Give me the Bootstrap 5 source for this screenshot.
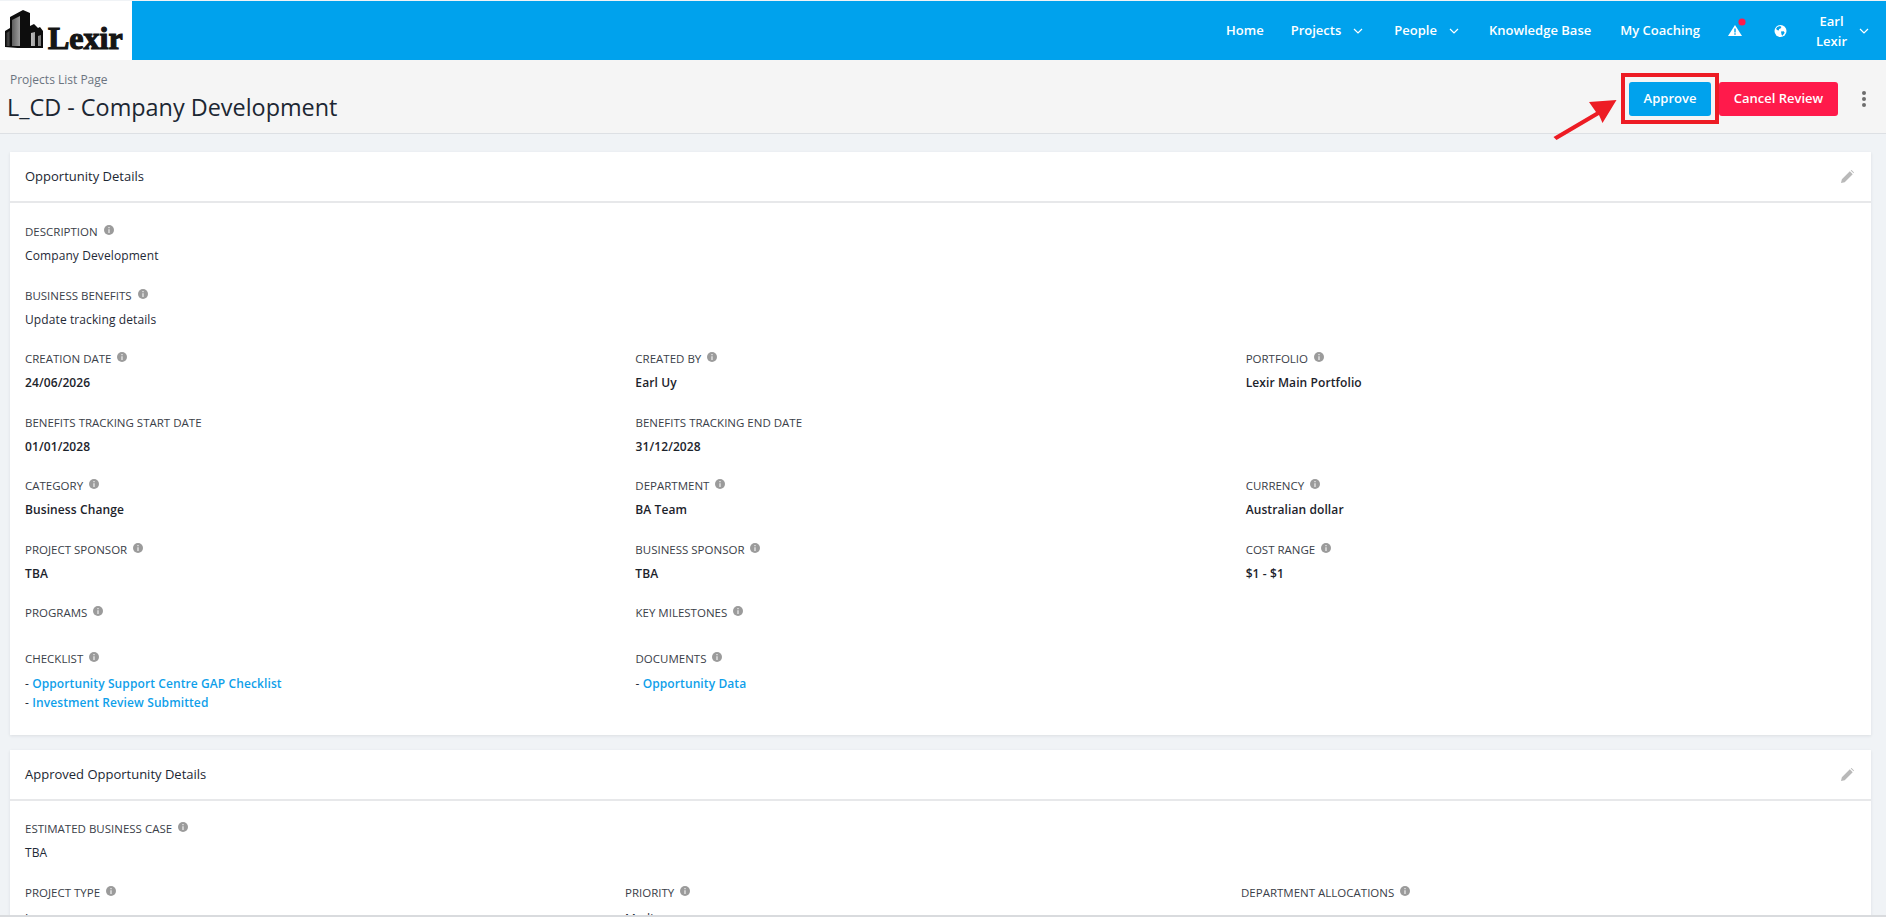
<!DOCTYPE html>
<html lang="en">
<head>
    <meta charset="UTF-8">
    <meta name="viewport" content="width=device-width, initial-scale=1">
    <title>L_CD - Company Development</title>
    <link href="https://cdn.jsdelivr.net/npm/bootstrap@5.3.0/dist/css/bootstrap.min.css" rel="stylesheet">
    <style>
        html, body { height: 917px; overflow: hidden; }
        body { background: #f0f3f6; font-family: "Open Sans", sans-serif; font-size: 12px; color: #1f2a37; padding-top: 1px; position: relative; }
        .top-bar { height: 59px; background: #00a2ed; padding: 0; }
        .logo-box { width: 132px; height: 59px; background: #fff; gap: 4px; padding: 9px 0 0 5px; }
        .logo-word { font-family: "Liberation Serif", serif; font-weight: 700; font-size: 32px; color: #151515; -webkit-text-stroke: 1.2px #151515; line-height: 1; margin-top: 12px; }
        .top-link { color: #fff; font-size: 13px; font-weight: 600; text-decoration: none; white-space: nowrap; }
        .nav-list { padding-right: 17px; }
        .w-home { margin-right: 27px; }
        .w-projects { margin-right: 31px; }
        .w-people { margin-right: 30px; }
        .w-kb { margin-right: 29px; }
        .w-coach { margin-right: 28px; }
        .w-alert { margin-right: 32px; }
        .w-globe { margin-right: 29px; }
        .chev { width: 10px; height: 6px; margin-left: 12px; }
        .user-name { text-align: center; line-height: 20px; }
        .alert-dot { position: absolute; left: 100%; top: -3px; transform: translate(-50%, -50%); }
        .sub-head { height: 74px; background: #f5f5f5; border-bottom: 1px solid #dde0e4; padding: 0 20px 0 7px; }
        .crumb { font-size: 12px; color: #6b7480; padding-left: 3px; line-height: 16px; padding-top: 12px; }
        .page-title { font-size: 23.4px; font-weight: 400; margin: 0; line-height: 33px; color: #1c2733; padding-top: 3px; }
        .btn-approve, .btn-cancel { height: 34px; border: 0; border-radius: 3px; color: #fff; font-size: 13px; font-weight: 600; padding: 0; }
        .btn-approve { width: 82px; background: #00a2ed; margin-right: 8px; }
        .btn-cancel { width: 119px; background: #ff1a4b; }
        .kebab { width: 4px; margin-left: 24px; gap: 2px; }
        .kebab span { width: 4px; height: 4px; border-radius: 50%; background: #6d6d6d; }
        .btn-group-top { padding-top: 22px; align-self: flex-start; }
        .detail-box { margin: 18px 15px 15px 10px; background: #fff; border: 0; border-radius: 0; box-shadow: 0 1px 3px rgba(40,50,60,.1); }
        .detail-box + .detail-box { margin-top: 15px; }
        .detail-box + .detail-box .box-body { padding-top: 20px; }
        .box-head { height: 51px; padding: 0 17px 0 15px; border-bottom: 2px solid #e7e8ea; font-size: 13px; color: #1c2733; }
        .box-body { padding: 21px 15px 0; }
        .cell-row { display: flex; height: 63.5px; }
        .cell-row.short { height: 46px; }
        .cell-row.tall { height: 84px; }
        .cell { width: 610.5px; }
        .alt .cell:nth-child(1) { width: 600px; }
        .alt .cell:nth-child(2) { width: 616px; }
        .alt .field-value { margin-top: 10px; }
        .field-label { font-size: 11.5px; color: #3a4048; text-transform: uppercase; line-height: 16px; display: flex; align-items: flex-start; }
        .info-dot { width: 10px; height: 10px; margin-left: 6px; margin-top: 1px; flex: none; }
        .field-value { font-size: 12px; margin-top: 8px; line-height: 16px; color: #1f2a37; letter-spacing: .1px; }
        .field-value.heavy { font-weight: 600; color: #1c232b; }
        .field-value a { color: #0f9fea; font-weight: 600; text-decoration: none; }
        .field-value.multi { line-height: 19px; margin-top: 7px; }
        .pen { width: 13px; height: 13px; }
        .bottom-line { position: absolute; left: 0; right: 0; bottom: 0; height: 2px; background: #d9dbde; }
        .red-box { position: absolute; left: 1621px; top: 73px; width: 98px; height: 51px; border: 4px solid #ed1c24; }
        .red-arrow { position: absolute; left: 1550px; top: 96px; width: 70px; height: 48px; }
    </style>
</head>
<body>

<nav class="top-bar d-flex align-items-center justify-content-between">
    <div class="logo-box d-flex align-items-start">
        <svg width="39" height="38" viewBox="0 0 39 38">
            <defs>
                <linearGradient id="steel" x1="0" y1="0" x2="1" y2="0">
                    <stop offset="0" stop-color="#333"/>
                    <stop offset=".6" stop-color="#d6d6d6"/>
                    <stop offset="1" stop-color="#777"/>
                </linearGradient>
            </defs>
            <path fill="#0d0d0d" d="M0 37V21l5-3V7l13-7 7 3v13l4-2 4 4 2-1 3 4v19z"/>
            <path fill="url(#steel)" d="M1.500 36V23l3-2v15zM7 36V10l8-4v30zM26 36V23l4-1v14zM33 36V26l3-1v11z"/>
        </svg>
        <span class="logo-word">Lexir</span>
    </div>
    <div class="nav-list d-flex align-items-center">
        <a class="top-link w-home" href="#">Home</a>
        <a class="top-link w-projects d-flex align-items-center" href="#">Projects
            <svg class="chev" viewBox="0 0 10 6"><path d="M1 1l4 4 4-4" fill="none" stroke="#fff" stroke-width="1.2"/></svg></a>
        <a class="top-link w-people d-flex align-items-center" href="#">People
            <svg class="chev" viewBox="0 0 10 6"><path d="M1 1l4 4 4-4" fill="none" stroke="#fff" stroke-width="1.2"/></svg></a>
        <a class="top-link w-kb" href="#">Knowledge Base</a>
        <a class="top-link w-coach" href="#">My Coaching</a>
        <a class="top-link w-alert position-relative d-flex" href="#">
            <svg width="14" height="11" viewBox="0 0 14 11"><path fill="#fff" d="M7 0l7 11H0z"/><path fill="#00a2ed" d="M6.300 3.500h1.400v4H6.300zM6.300 8.300h1.400v1.400H6.300z"/></svg>
            <svg class="alert-dot" width="8" height="8" viewBox="0 0 8 8"><circle cx="4" cy="4" r="3.600" fill="#ff1a4b"/></svg>
        </a>
        <a class="top-link w-globe d-flex" href="#">
            <svg width="13" height="12" viewBox="0 0 13 13"><circle cx="6.500" cy="6.500" r="6.500" fill="#fff"/><path fill="#00a2ed" d="M3 2.200l3-1 1.500 1-1 1.700-1.500.4-.3 1.700-2-.5-1-1.500zM7 7l3-.2 1 1.500-2.400 3.300-1-1.200z"/></svg>
        </a>
        <a class="top-link d-flex align-items-center" href="#">
            <span class="user-name">Earl<br>Lexir</span>
            <svg class="chev" viewBox="0 0 10 6"><path d="M1 1l4 4 4-4" fill="none" stroke="#fff" stroke-width="1.2"/></svg>
        </a>
    </div>
</nav>

<header class="sub-head d-flex justify-content-between">
    <div>
        <div class="crumb">Projects List Page</div>
        <h1 class="page-title">L_CD - Company Development</h1>
    </div>
    <div class="btn-group-top d-flex align-items-center">
        <button class="btn-approve">Approve</button>
        <button class="btn-cancel">Cancel Review</button>
        <div class="kebab d-flex flex-column"><span></span><span></span><span></span></div>
    </div>
</header>

<!-- Opportunity Details -->
<section class="detail-box">
    <div class="box-head d-flex align-items-center justify-content-between">
        <span>Opportunity Details</span>
        <svg class="pen" viewBox="0 0 15 15"><path fill="#b9b9b9" d="M0 15l1-4.300L10.200 1.500l3.300 3.300L4.300 14zM11.200.5l1-.5 2.800 2.800-.5 1z"/></svg>
    </div>
    <div class="box-body">
        <div class="cell-row"><div class="cell">
            <div class="field-label">Description<svg class="info-dot" viewBox="0 0 10 10"><use href="#inf"/></svg></div>
            <div class="field-value">Company Development</div>
        </div></div>
        <div class="cell-row"><div class="cell">
            <div class="field-label">Business Benefits<svg class="info-dot" viewBox="0 0 10 10"><use href="#inf"/></svg></div>
            <div class="field-value">Update tracking details</div>
        </div></div>
        <div class="cell-row">
            <div class="cell"><div class="field-label">Creation Date<svg class="info-dot" viewBox="0 0 10 10"><use href="#inf"/></svg></div><div class="field-value heavy">24/06/2026</div></div>
            <div class="cell"><div class="field-label">Created By<svg class="info-dot" viewBox="0 0 10 10"><use href="#inf"/></svg></div><div class="field-value heavy">Earl Uy</div></div>
            <div class="cell"><div class="field-label">Portfolio<svg class="info-dot" viewBox="0 0 10 10"><use href="#inf"/></svg></div><div class="field-value heavy">Lexir Main Portfolio</div></div>
        </div>
        <div class="cell-row">
            <div class="cell"><div class="field-label">Benefits Tracking Start Date</div><div class="field-value heavy">01/01/2028</div></div>
            <div class="cell"><div class="field-label">Benefits Tracking End Date</div><div class="field-value heavy">31/12/2028</div></div>
        </div>
        <div class="cell-row">
            <div class="cell"><div class="field-label">Category<svg class="info-dot" viewBox="0 0 10 10"><use href="#inf"/></svg></div><div class="field-value heavy">Business Change</div></div>
            <div class="cell"><div class="field-label">Department<svg class="info-dot" viewBox="0 0 10 10"><use href="#inf"/></svg></div><div class="field-value heavy">BA Team</div></div>
            <div class="cell"><div class="field-label">Currency<svg class="info-dot" viewBox="0 0 10 10"><use href="#inf"/></svg></div><div class="field-value heavy">Australian dollar</div></div>
        </div>
        <div class="cell-row">
            <div class="cell"><div class="field-label">Project Sponsor<svg class="info-dot" viewBox="0 0 10 10"><use href="#inf"/></svg></div><div class="field-value heavy">TBA</div></div>
            <div class="cell"><div class="field-label">Business Sponsor<svg class="info-dot" viewBox="0 0 10 10"><use href="#inf"/></svg></div><div class="field-value heavy">TBA</div></div>
            <div class="cell"><div class="field-label">Cost Range<svg class="info-dot" viewBox="0 0 10 10"><use href="#inf"/></svg></div><div class="field-value heavy">$1 - $1</div></div>
        </div>
        <div class="cell-row short">
            <div class="cell"><div class="field-label">Programs<svg class="info-dot" viewBox="0 0 10 10"><use href="#inf"/></svg></div></div>
            <div class="cell"><div class="field-label">Key Milestones<svg class="info-dot" viewBox="0 0 10 10"><use href="#inf"/></svg></div></div>
        </div>
        <div class="cell-row tall">
            <div class="cell"><div class="field-label">Checklist<svg class="info-dot" viewBox="0 0 10 10"><use href="#inf"/></svg></div>
                <div class="field-value multi">- <a href="#">Opportunity Support Centre GAP Checklist</a><br>- <a href="#">Investment Review Submitted</a></div></div>
            <div class="cell"><div class="field-label">Documents<svg class="info-dot" viewBox="0 0 10 10"><use href="#inf"/></svg></div>
                <div class="field-value multi">- <a href="#">Opportunity Data</a></div></div>
        </div>
    </div>
</section>

<!-- Approved Opportunity Details -->
<section class="detail-box">
    <div class="box-head d-flex align-items-center justify-content-between">
        <span>Approved Opportunity Details</span>
        <svg class="pen" viewBox="0 0 15 15"><path fill="#b9b9b9" d="M0 15l1-4.300L10.200 1.500l3.300 3.300L4.300 14zM11.200.5l1-.5 2.800 2.800-.5 1z"/></svg>
    </div>
    <div class="box-body">
        <div class="cell-row"><div class="cell">
            <div class="field-label">Estimated Business Case<svg class="info-dot" viewBox="0 0 10 10"><use href="#inf"/></svg></div>
            <div class="field-value">TBA</div>
        </div></div>
        <div class="cell-row alt">
            <div class="cell"><div class="field-label">Project Type<svg class="info-dot" viewBox="0 0 10 10"><use href="#inf"/></svg></div><div class="field-value">Large</div></div>
            <div class="cell"><div class="field-label">Priority<svg class="info-dot" viewBox="0 0 10 10"><use href="#inf"/></svg></div><div class="field-value">Medium</div></div>
            <div class="cell"><div class="field-label">Department Allocations<svg class="info-dot" viewBox="0 0 10 10"><use href="#inf"/></svg></div></div>
        </div>
    </div>
</section>

<div class="bottom-line"></div>

<!-- annotation over the screenshot -->
<div class="red-box"></div>
<svg class="red-arrow" viewBox="0 0 70 48">
    <path fill="#ed1c24" d="M66.500 4L39 6l7 10L3.500 41l3 3L49 19l3.500 8z"/>
</svg>

<svg width="0" height="0" class="position-absolute">
    <symbol id="inf" viewBox="0 0 10 10">
        <circle cx="5" cy="5" r="5" fill="#9b9b9b"/>
        <path fill="#e4e4e4" d="M4.300 2h1.400v1.300H4.300zM4.300 4.200h1.400V8H4.300z"/>
    </symbol>
</svg>

<script src="https://cdn.jsdelivr.net/npm/bootstrap@5.3.0/dist/js/bootstrap.bundle.min.js"></script>
</body>
</html>
